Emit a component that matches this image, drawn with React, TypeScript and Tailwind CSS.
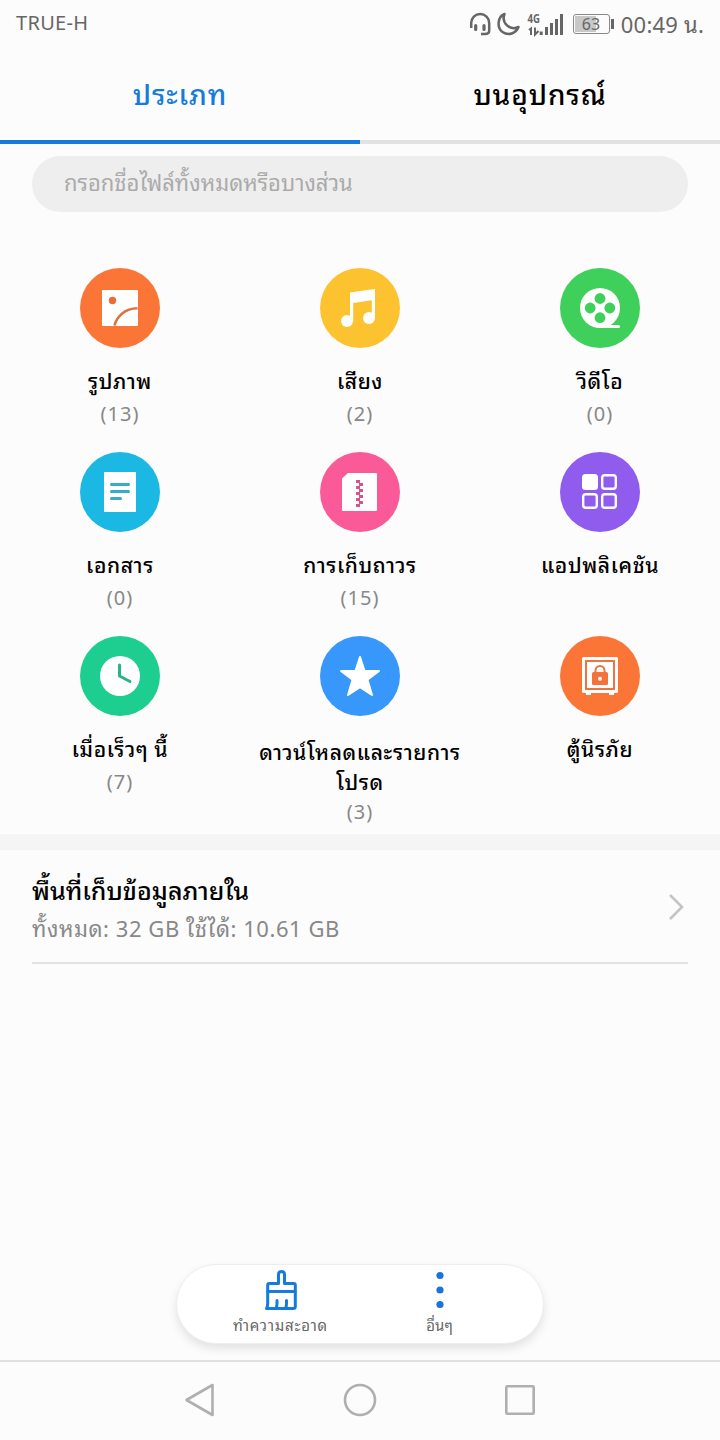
import type { ReactNode } from "react";

type Category = {
  label: string[];
  count?: number;
  color: string;
  icon: ReactNode;
};

const categories: Category[] = [
  {
    label: ["รูปภาพ"],
    count: 13,
    color: "bg-[#fb7536]",
    icon: (
      <>
        <rect x="22" y="22" width="36" height="36" rx="1" fill="#fff" />
        <circle cx="32.5" cy="32.5" r="3.7" fill="#ec6c35" />
        <path d="M34.5 57.5C37 48 45 40.5 57.5 40.3" fill="none" stroke="#e0703c" strokeWidth="2.6" />
      </>
    ),
  },
  {
    label: ["เสียง"],
    count: 2,
    color: "bg-[#fdc230]",
    icon: (
      <>
        <path d="M30 24.5L55 21V50.5H51.8V32.3L33.2 35V53H30Z" fill="#fff" />
        <circle cx="27" cy="53" r="6" fill="#fff" />
        <circle cx="49" cy="50" r="6" fill="#fff" />
      </>
    ),
  },
  {
    label: ["วิดีโอ"],
    count: 0,
    color: "bg-[#3fcf5b]",
    icon: (
      <>
        <circle cx="40" cy="40" r="20" fill="#fff" />
        <path d="M42 57H58.5Q60 57 60 58.5T58.5 60H40Z" fill="#fff" />
        <circle cx="40" cy="30.5" r="5.4" fill="#3fcf5b" />
        <circle cx="30.2" cy="40" r="5.4" fill="#3fcf5b" />
        <circle cx="49.8" cy="40" r="5.4" fill="#3fcf5b" />
        <circle cx="40" cy="49.7" r="5.4" fill="#3fcf5b" />
      </>
    ),
  },
  {
    label: ["เอกสาร"],
    count: 0,
    color: "bg-[#1cb8e4]",
    icon: (
      <>
        <rect x="24" y="20" width="32" height="40" rx="1" fill="#fff" />
        <path d="M31.5 32.5H48.5M31.5 39.5H48.5M31.5 46.5H40.5" stroke="#35aac9" strokeWidth="3" strokeLinecap="round" />
      </>
    ),
  },
  {
    label: ["การเก็บถาวร"],
    count: 15,
    color: "bg-[#fb5a98]",
    icon: (
      <>
        <path d="M28 21H56Q57 21 57 22V58Q57 59 56 59H23Q22 59 22 58V26.5Z" fill="#fff" />
        <path
          d="M36 28h4v3h3v3h-3v3h3v3h-3v3h3v3h-3v3h3v3h-3v3h-4v-3h3v-3h-3v-3h3v-3h-3v-3h3v-3h-3v-3h3v-3h-3z"
          fill="#d9528a"
        />
      </>
    ),
  },
  {
    label: ["แอปพลิเคชัน"],
    color: "bg-[#8f5cee]",
    icon: (
      <>
        <rect x="22" y="22" width="16" height="16" rx="3.5" fill="#fff" />
        <g fill="none" stroke="#fff" strokeWidth="2.4">
          <rect x="42.2" y="23.2" width="13.6" height="13.6" rx="2.6" />
          <rect x="23.2" y="42.2" width="13.6" height="13.6" rx="2.6" />
          <rect x="42.2" y="42.2" width="13.6" height="13.6" rx="2.6" />
        </g>
      </>
    ),
  },
  {
    label: ["เมื่อเร็วๆ นี้"],
    count: 7,
    color: "bg-[#1dce90]",
    icon: (
      <>
        <circle cx="40" cy="40" r="20" fill="#fff" />
        <path d="M39.5 29V40L50 45.5" fill="none" stroke="#27b584" strokeWidth="3" strokeLinecap="round" strokeLinejoin="round" />
      </>
    ),
  },
  {
    label: ["ดาวน์โหลดและรายการ", "โปรด"],
    count: 3,
    color: "bg-[#3897fb]",
    icon: (
      <path
        d="M40 21L44.6 35H59L47.5 43.8L52 59L40 51.2L28 59L32.5 43.8L21 35H35.4Z"
        fill="#fff"
        stroke="#fff"
        strokeWidth="2"
        strokeLinejoin="round"
      />
    ),
  },
  {
    label: ["ตู้นิรภัย"],
    color: "bg-[#fb7536]",
    icon: (
      <>
        <rect x="22" y="21" width="36" height="36" rx="1.5" fill="#fff" />
        <path d="M26 57h5v2h-5zM49 57h5v2h-5z" fill="#fff" />
        <rect x="26" y="25" width="28" height="28" fill="none" stroke="#ed7440" strokeWidth="2" />
        <path d="M35.5 37V34.5a4.5 4.5 0 0 1 9 0V37" fill="none" stroke="#ed7440" strokeWidth="2" />
        <rect x="32" y="36" width="16" height="13" rx="1.5" fill="#f4733b" />
        <circle cx="40" cy="42.8" r="2" fill="#fff" />
      </>
    ),
  },
];

function StatusBar() {
  return (
    <header className="flex h-12 items-center justify-between px-4 text-[#666]">
      <span className="-mt-0.5 text-[20px] tracking-[0.3px]">TRUE-H</span>
      <div className="flex items-center">
        <svg width="96" height="28" viewBox="468 10 96 28" className="mr-[9px]">
          <g fill="none" stroke="#666" strokeWidth="2.5">
            <path d="M471.2 28V23a9 9 0 0 1 18 0V30.5Q489.2 34 485 34H481" />
            <path d="M475.7 25.5v4M484 25.5v4" strokeWidth="3.2" strokeLinecap="round" />
            <path d="M504.5 14C497 17 497 28 502.5 32C508.5 36 516 33.5 518.5 27C510 31 501 23 504.5 14Z" strokeLinejoin="round" />
            <path d="M529 30L531 28.5V35M535 27.5V34.5L538.5 31" strokeWidth="2" />
            <path d="M541.2 31.5V35M546.5 27V35M551.5 23V35M556.5 19V35M561.5 14V35" strokeWidth="3" />
          </g>
          <text x="527.5" y="23" fill="#666" fontSize="13" fontWeight="700" textLength="12.5" lengthAdjust="spacingAndGlyphs">
            4G
          </text>
        </svg>
        <div className="flex h-5 w-[37px] items-center rounded-[3px] border border-[#888] p-px">
          <div className="flex h-full w-[21px] items-center bg-[#c8c8c8]">
            <span className="ml-[7px] text-[16px] leading-none">63</span>
          </div>
        </div>
        <span className="ml-px h-2.5 w-[3px] bg-[#666]" />
        <span className="mt-px ml-[7px] text-[22px] tracking-[0.2px] whitespace-nowrap">00:49 น.</span>
      </div>
    </header>
  );
}

function CategoryCell({ label, count, color, icon }: Category) {
  return (
    <div className="flex h-[184px] flex-col items-center">
      <div className={`size-20 shrink-0 rounded-full ${color}`}>
        <svg width="80" height="80" viewBox="0 0 80 80">
          {icon}
        </svg>
      </div>
      <div className={label.length > 1 ? "mt-[21px]" : "mt-[18px]"}>
        {label.map((line) => (
          <p
            key={line}
            className="h-[30px] text-center text-[21px] leading-[30px] font-medium tracking-[0.6px] whitespace-nowrap text-black"
          >
            {line}
          </p>
        ))}
      </div>
      {count !== undefined && (
        <p className={`text-[20px] leading-[30px] tracking-[1px] text-[#888] ${label.length > 1 ? "" : "mt-[3px]"}`}>({count})</p>
      )}
    </div>
  );
}

export default function App() {
  return (
    <div className="flex h-[1440px] w-[720px] flex-col overflow-hidden bg-[#fcfcfc] font-['Noto_Sans','Noto_Sans_Thai_Looped','Noto_Looped_Thai','Loma','Garuda','Waree','Umpush','Tlwg_Typo','Droid_Sans_Thai',sans-serif]">
      <StatusBar />

      <nav className="grid h-24 shrink-0 grid-cols-2 text-center text-[28px] leading-[92px] font-medium tracking-[0.9px]">
        <span className="border-b-4 border-[#157bdc] text-[#157bdc]">ประเภท</span>
        <span className="border-b-4 border-[#e2e2e2] text-black">บนอุปกรณ์</span>
      </nav>

      <div className="mx-8 mt-3 flex h-14 shrink-0 items-center rounded-full bg-[#eee] px-8 pb-1 text-[22px] text-[#aaa]">
        กรอกชื่อไฟล์ทั้งหมดหรือบางส่วน
      </div>

      <main className="mt-14 grid h-[566px] shrink-0 grid-cols-3 content-start">
        {categories.map((category) => (
          <CategoryCell key={category.label[0]} {...category} />
        ))}
      </main>

      <div className="h-4 shrink-0 bg-[#f5f5f5]" />

      <section className="mx-8 flex h-[114px] shrink-0 items-center justify-between border-b-2 border-[#e2e2e2]">
        <div className="pt-1.5">
          <p className="text-[25px] leading-[38px] font-medium text-black">พื้นที่เก็บข้อมูลภายใน</p>
          <p className="text-[22px] leading-[38px] tracking-[0.55px] text-[#888]">ทั้งหมด: 32 GB ใช้ได้: 10.61 GB</p>
        </div>
        <svg width="20" height="28" viewBox="1 -1 20 28">
          <path d="M3 2L15 14L3 26" fill="none" stroke="#c4c4c4" strokeWidth="2.6" />
        </svg>
      </section>

      <div className="mt-auto mb-4 flex h-20 w-[368px] shrink-0 self-center rounded-full border border-[#eee] bg-white px-6 text-[15px] text-[#666] shadow-[0_5px_10px_rgba(0,0,0,0.1)]">
        <button className="flex flex-1 flex-col items-center">
          <svg width="40" height="46" viewBox="1 -1 40 46" className="shrink-0">
            <g fill="none" stroke="#157bdc" strokeWidth="3" strokeLinejoin="round" strokeLinecap="round">
              <path d="M7.7 24.5V19Q7.7 17.500 9.200 17.500H18.500V8.500Q18.500 5.500 21.500 5.500T24.500 8.500V17.500H33.800Q35.300 17.500 35.300 19V40.500Q35.300 42.500 33.300 42.500H6.500Q7.700 40.500 7.700 37.500V24.500" />
              <path d="M7.700 25.500H35.300M17 34.500V37.500Q17 40.500 16 42.500M26.500 34.500V37.500Q26.500 40.500 25.500 42.500" />
            </g>
          </svg>
          <span className="leading-[28px] tracking-[0.75px] whitespace-nowrap">ทำความสะอาด</span>
        </button>
        <button className="flex flex-1 flex-col items-center">
          <svg width="40" height="46" viewBox="0 0 40 46" className="shrink-0" fill="#1b72dc">
            <circle cx="20" cy="10.500" r="3.600" />
            <circle cx="20" cy="25" r="3.600" />
            <circle cx="20" cy="39.500" r="3.600" />
          </svg>
          <span className="leading-[28px] whitespace-nowrap">อื่นๆ</span>
        </button>
      </div>

      <footer className="flex h-20 shrink-0 items-center justify-center gap-[120px] border-t-2 border-[#e0e0e0]">
        <svg width="40" height="40" viewBox="0 0 40 40" fill="none" stroke="#afafaf" strokeWidth="2.600" strokeLinejoin="round">
          <path d="M6.500 19L32.500 4V34Z" />
        </svg>
        <svg width="40" height="40" viewBox="0 0 40 40" fill="none" stroke="#afafaf" strokeWidth="2.600">
          <circle cx="20" cy="19" r="15" />
        </svg>
        <svg width="40" height="40" viewBox="0 0 40 40" fill="none" stroke="#afafaf" strokeWidth="2.600">
          <rect x="6.300" y="5.300" width="27.400" height="27.400" rx="1" />
        </svg>
      </footer>
    </div>
  );
}
